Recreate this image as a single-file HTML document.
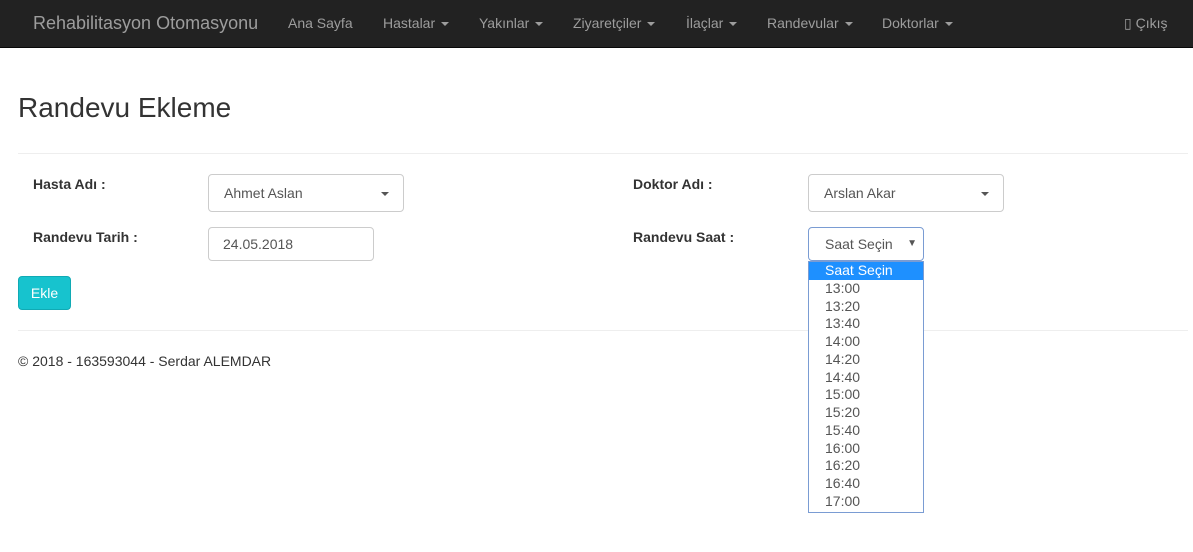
<!DOCTYPE html>
<html><head><meta charset="utf-8"><style>
*{box-sizing:border-box}
body{margin:0;width:1193px;height:552px;background:#fff;font-family:"Liberation Sans",Arial,sans-serif;font-size:14px;color:#333;position:relative;overflow:hidden}
.nav{position:absolute;left:0;top:0;width:1193px;height:48px;background:#222;border-bottom:1px solid #080808}
.nav span{position:absolute;top:15px;color:#9d9d9d;font-size:14px;white-space:nowrap}
.car{display:inline-block;width:0;height:0;border-left:4px solid transparent;border-right:4px solid transparent;border-top:4px solid currentColor;vertical-align:middle;margin-left:6px}
.a{position:absolute;white-space:nowrap}
.lbl{font-weight:bold;font-size:14px}
.box{position:absolute;border:1px solid #ccc;border-radius:4px;background:#fff;padding:0 15px;line-height:36px;font-size:14px;color:#555}
.hr{position:absolute;left:18px;width:1170px;height:1px;background:#eee}
.list{position:absolute;z-index:5;left:808px;top:261px;width:116px;height:252px;border:1px solid #7a9cd3;background:#fff;font-size:14px;color:#555}
.list div{height:17.75px;line-height:17px;padding-left:16px}
</style></head><body>
<div class="nav">
<span style="left:33px;top:13px;font-size:18px">Rehabilitasyon Otomasyonu</span>
<span style="left:288px">Ana Sayfa</span>
<span style="left:383px">Hastalar<i class="car"></i></span>
<span style="left:479px">Yakınlar<i class="car"></i></span>
<span style="left:573px">Ziyaretçiler<i class="car"></i></span>
<span style="left:686px">İlaçlar<i class="car"></i></span>
<span style="left:767px">Randevular<i class="car"></i></span>
<span style="left:882px">Doktorlar<i class="car"></i></span>
<span style="left:1124px">▯ Çıkış</span>
</div>
<div class="hr" style="top:153px"></div>
<div class="hr" style="top:330px"></div>
<div class="a" style="left:18px;top:92px;font-size:28px;color:#333">Randevu Ekleme</div>
<div class="a lbl" style="left:33px;top:176px">Hasta Adı :</div>
<div class="box" style="left:208px;top:174px;width:196px;height:38px">Ahmet Aslan<i class="car" style="position:absolute;right:14px;top:17px;color:#555"></i></div>
<div class="a lbl" style="left:633px;top:176px">Doktor Adı :</div>
<div class="box" style="left:808px;top:174px;width:196px;height:38px">Arslan Akar<i class="car" style="position:absolute;right:14px;top:17px;color:#555"></i></div>
<div class="a lbl" style="left:33px;top:229px">Randevu Tarih :</div>
<div class="box" style="left:208px;top:227px;width:166px;height:34px;line-height:32px;padding-left:14px">24.05.2018</div>
<div class="a lbl" style="left:633px;top:229px">Randevu Saat :</div>
<div class="box" style="left:808px;top:227px;width:116px;height:34px;line-height:32px;border-color:#7a9cd3;padding-left:16px">Saat Seçin<span style="position:absolute;right:6px;top:0;font-size:10px">▼</span></div>
<div class="list">
<div style="background:#1e90ff;color:#fff">Saat Seçin</div>
<div>13:00</div><div>13:20</div><div>13:40</div><div>14:00</div><div>14:20</div><div>14:40</div><div>15:00</div><div>15:20</div><div>15:40</div><div>16:00</div><div>16:20</div><div>16:40</div><div>17:00</div>
</div>
<div class="a" style="left:18px;top:276px;width:53px;height:34px;background:#17c3ce;border:1px solid #10aab4;border-radius:4px;color:#fff;text-align:center;line-height:32px">Ekle</div>
<div class="a" style="left:18px;top:353px">© 2018 - 163593044 - Serdar ALEMDAR</div>
</body></html>
